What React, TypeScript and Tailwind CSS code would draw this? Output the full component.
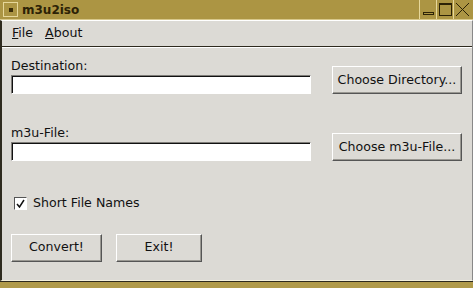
import React from 'react';

function RaisedButton({ children, className = '' }: { children: React.ReactNode; className?: string }) {
  return (
    <button
      className={`h-[28px] shrink-0 bg-[#dcdad5] border border-t-white border-l-white border-b-[#555] border-r-[#555] shadow-[inset_-1px_-1px_0_#9a9892] text-[#111] ${className}`}
    >
      {children}
    </button>
  );
}

function Field() {
  return (
    <div className="w-[300px] h-[19px] bg-white border border-t-[#7e7c78] border-l-[#7e7c78] border-b-white border-r-white shadow-[inset_1px_1px_0_#111]" />
  );
}

export default function App() {
  return (
    <div
      className="w-[473px] h-[288px] flex flex-col bg-[#b09a4a] text-[12.6px] text-[#111]"
      style={{ fontFamily: '"DejaVu Sans", sans-serif' }}
    >
      {/* Title bar */}
      <div className="h-[20px] shrink-0 flex items-center bg-[#ac9543] border-b border-[#d8c88a]">
        <div className="ml-[3px] w-[15px] h-[15px] border border-[#e6d79a] flex items-center justify-center">
          <div className="w-[4px] h-[4px] bg-[#3a2c08]" />
        </div>
        <span className="ml-[4px] font-bold text-[12px] text-[#2c2206]">m3u2iso</span>
        <div className="ml-auto flex h-full">
          <div className="w-[17px] h-[19px] border-l border-[#e6d79a] flex items-end justify-center pb-[4px]">
            <div className="w-[11px] h-[3px] border border-[#2c2206]" />
          </div>
          <div className="w-[17px] h-[19px] border-l border-[#e6d79a] flex items-center justify-center">
            <div className="w-[13px] h-[13px] border border-[#2c2206] border-t-2" />
          </div>
          <div className="w-[18px] h-[19px] border-l border-[#e6d79a] flex items-center justify-center mr-[2px]">
            <svg width="15" height="15" viewBox="0 0 15 15">
              <path d="M1 1L14 14M14 1L1 14" stroke="#2c2206" strokeWidth="1" />
            </svg>
          </div>
        </div>
      </div>

      {/* Client area */}
      <div className="flex-1 flex flex-col bg-[#dcdad5] border-l-2 border-l-[#2e2a1e] border-r border-r-[#888] border-t border-t-white border-b border-b-[#f4f0dc] shadow-[0_1px_0_#2e2a1e] mb-[7px]">
        {/* Menu */}
        <div className="h-[26px] shrink-0 flex items-center gap-[12px] px-[10px] border-b border-[#2e2a1e] shadow-[0_1px_0_#fff]">
          <span><span className="underline">F</span>ile</span>
          <span><span className="underline">A</span>bout</span>
        </div>

        <div className="flex-1 flex flex-col pl-[9px] pr-[10px]">
          <div className="flex items-end justify-between mt-[11px]">
            <div className="flex flex-col">
              <span className="leading-[16px] mb-[1px]">Destination:</span>
              <Field />
            </div>
            <RaisedButton className="w-[130px]">Choose Directory...</RaisedButton>
          </div>

          <div className="flex items-end justify-between mt-[31px]">
            <div className="flex flex-col">
              <span className="leading-[16px] mb-[1px]">m3u-File:</span>
              <Field />
            </div>
            <RaisedButton className="w-[130px]">Choose m3u-File...</RaisedButton>
          </div>

          <div className="flex items-center mt-[33px] ml-[3px]">
            <div className="w-[13px] h-[13px] bg-white border border-t-[#555] border-l-[#555] border-b-white border-r-white flex items-center justify-center">
              <svg width="9" height="9" viewBox="0 0 9 9">
                <path d="M1 5L3.5 8L8 1" stroke="#111" strokeWidth="1.5" fill="none" />
              </svg>
            </div>
            <span className="ml-[6px]">Short File Names</span>
          </div>

          <div className="flex gap-[14px] mt-[21px]">
            <RaisedButton className="w-[91px]">Convert!</RaisedButton>
            <RaisedButton className="w-[86px]">Exit!</RaisedButton>
          </div>
        </div>
      </div>
    </div>
  );
}
